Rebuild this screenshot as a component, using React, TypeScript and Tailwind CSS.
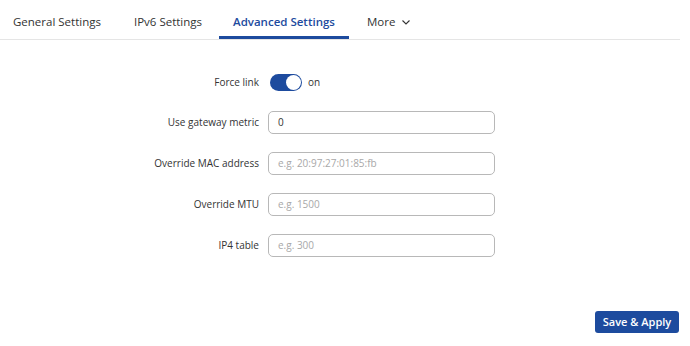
import React from "react";

const tabs = [
  { name: "General Settings", cls: "pl-[13px] pr-[17px]" },
  { name: "IPv6 Settings", cls: "pl-[16px] pr-[17px]" },
  { name: "Advanced Settings", cls: "px-[14px]" },
];

const fields = [
  { label: "Use gateway metric", value: "0", placeholder: "" },
  { label: "Override MAC address", value: "", placeholder: "e.g. 20:97:27:01:85:fb" },
  { label: "Override MTU", value: "", placeholder: "e.g. 1500" },
  { label: "IP4 table", value: "", placeholder: "e.g. 300" },
];

export default function App() {
  return (
    <div className="w-[690px] h-[346px] bg-white text-[#333] flex flex-col" style={{ fontFamily: '"Open Sans", sans-serif' }}>
      {/* Tabs */}
      <div className="flex items-end h-[40px] w-[680px] border-b border-[#e5e5e5]">
        {tabs.map((t) => {
          const active = t.name === "Advanced Settings";
          return (
            <div
              key={t.name}
              className={
                active
                  ? `${t.cls} h-full flex items-center border-b-[3px] border-[#1d4b9e] text-[#1d4b9e] font-semibold text-[11.5px] pt-[7px]`
                  : `${t.cls} h-full flex items-center text-[11.5px] text-[#333] pt-[4px]`
              }
            >
              {t.name}
            </div>
          );
        })}
        <div className="pl-[18px] h-full flex items-center gap-[6px] text-[11.5px] text-[#333] pt-[4px]">
          More
          <svg width="10" height="10" viewBox="0 0 10 10" fill="none">
            <path d="M1.5 3.5 L5 7 L8.5 3.5" stroke="#333" strokeWidth="1.1" />
          </svg>
        </div>
      </div>

      {/* Form */}
      <div className="flex flex-col pt-[34px] gap-[19px]">
        <div className="flex items-center h-[17px]">
          <div className="w-[259px] text-right text-[10px] text-[#333]">Force link</div>
          <div className="ml-[11px] w-[32px] h-[17px] rounded-full bg-[#1d4b9e] relative">
            <div className="absolute right-[1px] top-[1px] w-[15px] h-[15px] rounded-full bg-white" />
          </div>
          <span className="ml-[6px] text-[10px] text-[#333]">on</span>
        </div>
        <div className="flex flex-col gap-[18px] pt-[1px]">
          {fields.map((f) => (
            <div key={f.label} className="flex items-center">
              <div className="w-[259px] text-right text-[10px] text-[#333]">{f.label}</div>
              <div className="ml-[9px] w-[227px] h-[23px] border border-[#b8b8b8] rounded-[5px] flex items-center px-[9px] text-[10px]">
                {f.value ? (
                  <span className="text-[#333]">{f.value}</span>
                ) : (
                  <span className="text-[#a8a8a8]">{f.placeholder}</span>
                )}
              </div>
            </div>
          ))}
        </div>
      </div>

      <div className="flex-1" />
      <div className="flex justify-end pr-[11px] pb-[13px]">
        <button className="w-[84px] h-[22px] bg-[#1d4b9e] rounded-[3px] text-white text-[11px] font-semibold">
          Save &amp; Apply
        </button>
      </div>
    </div>
  );
}
